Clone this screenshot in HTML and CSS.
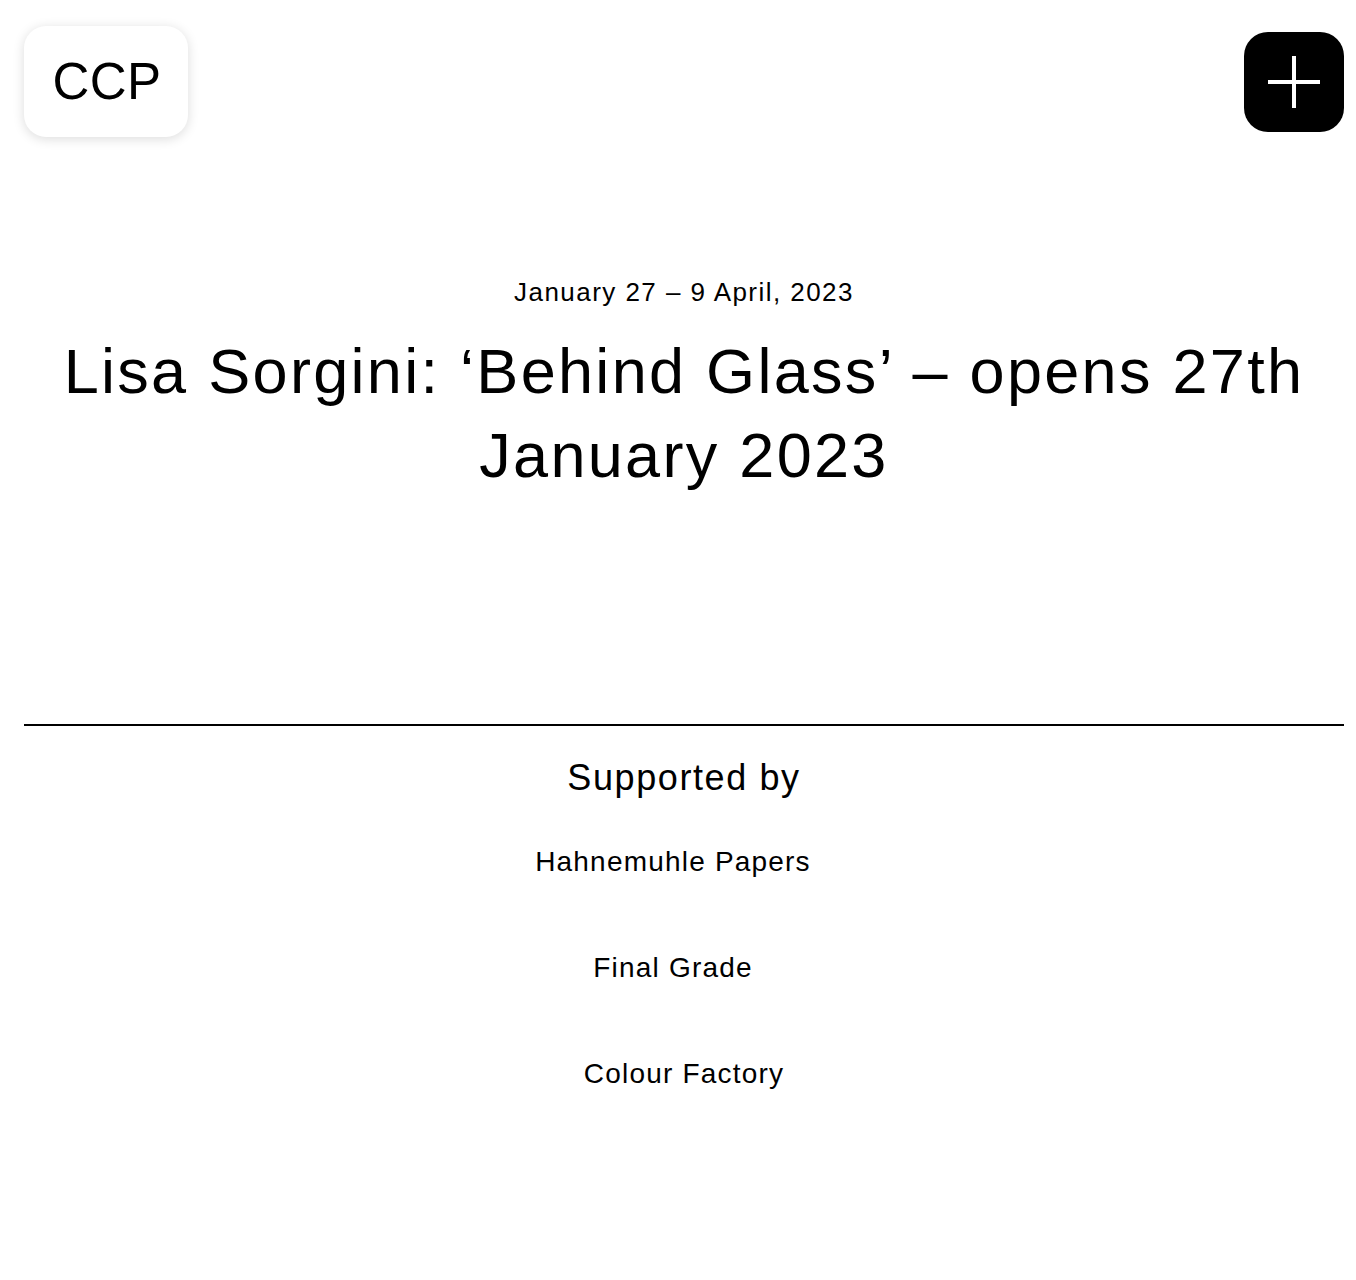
FILE: index.html
```html
<!DOCTYPE html>
<html lang="en">
<head>
<meta charset="utf-8">
<title>Lisa Sorgini: ‘Behind Glass’</title>
<link rel="stylesheet" href="styles.css">
</head>
<body>
<div class="page">
  <header class="header">
    <a class="logo" href="#">CCP</a>
    <button class="menu-btn" aria-label="Open menu">
      <svg width="52" height="52" viewBox="0 0 52 52" aria-hidden="true">
        <path d="M26 0V52M0 26H52" stroke="#fff" stroke-width="4"/>
      </svg>
    </button>
  </header>
  <main class="hero">
    <p class="date">January 27 – 9 April, 2023</p>
    <h1 class="title">Lisa Sorgini: ‘Behind Glass’ – opens 27th January 2023</h1>
  </main>
  <section class="support">
    <h2 class="support-heading">Supported by</h2>
    <ul class="sponsors">
      <li class="sponsor sponsor-offset">Hahnemuhle Papers</li>
      <li class="sponsor sponsor-offset">Final Grade</li>
      <li class="sponsor">Colour Factory</li>
    </ul>
  </section>
</div>
</body>
</html>
```

FILE: styles.css
```css
html, body {
  margin: 0;
  padding: 0;
  background: #fff;
  color: #000;
  font-family: "Liberation Sans", Arial, sans-serif;
}
.page {
  padding: 0 12px 0 24px;
  min-height: 1280px;
  box-sizing: border-box;
}
.header {
  display: flex;
  justify-content: space-between;
  align-items: center;
  padding-top: 26px;
}
.logo {
  display: flex;
  align-items: center;
  justify-content: center;
  width: 164px;
  height: 111px;
  box-sizing: border-box;
  padding-left: 2px;
  border-radius: 22px;
  background: #fff;
  box-shadow: 0 2px 12px rgba(0, 0, 0, 0.14);
  color: #000;
  text-decoration: none;
  font-size: 51px;
  letter-spacing: 0.5px;
}
.menu-btn {
  width: 100px;
  height: 100px;
  border: 0;
  padding: 0;
  border-radius: 24px;
  background: #000;
  display: flex;
  align-items: center;
  justify-content: center;
  cursor: pointer;
}
.menu-btn svg {
  display: block;
}
.hero {
  text-align: center;
  padding-top: 140px;
  width: 1320px;
}
.date {
  margin: 0;
  font-size: 26px;
  line-height: 31px;
  letter-spacing: 1.45px;
}
.title {
  margin: 21px 0 0;
  font-weight: 400;
  font-size: 63px;
  line-height: 84px;
  letter-spacing: 2.3px;
  padding: 0 10px;
}
.support {
  width: 1320px;
  margin-top: 227px;
  border-top: 2px solid #000;
  text-align: center;
}
.support-heading {
  margin: 30px 0 0;
  font-weight: 400;
  font-size: 36px;
  line-height: 43px;
  letter-spacing: 1.6px;
}
.sponsors {
  list-style: none;
  margin: 46px 0 0;
  padding: 0;
  display: flex;
  flex-direction: column;
  align-items: center;
  gap: 72px;
}
.sponsor {
  font-size: 28px;
  line-height: 34px;
  letter-spacing: 1.2px;
}
.sponsor-offset {
  padding-right: 22px;
}
```
